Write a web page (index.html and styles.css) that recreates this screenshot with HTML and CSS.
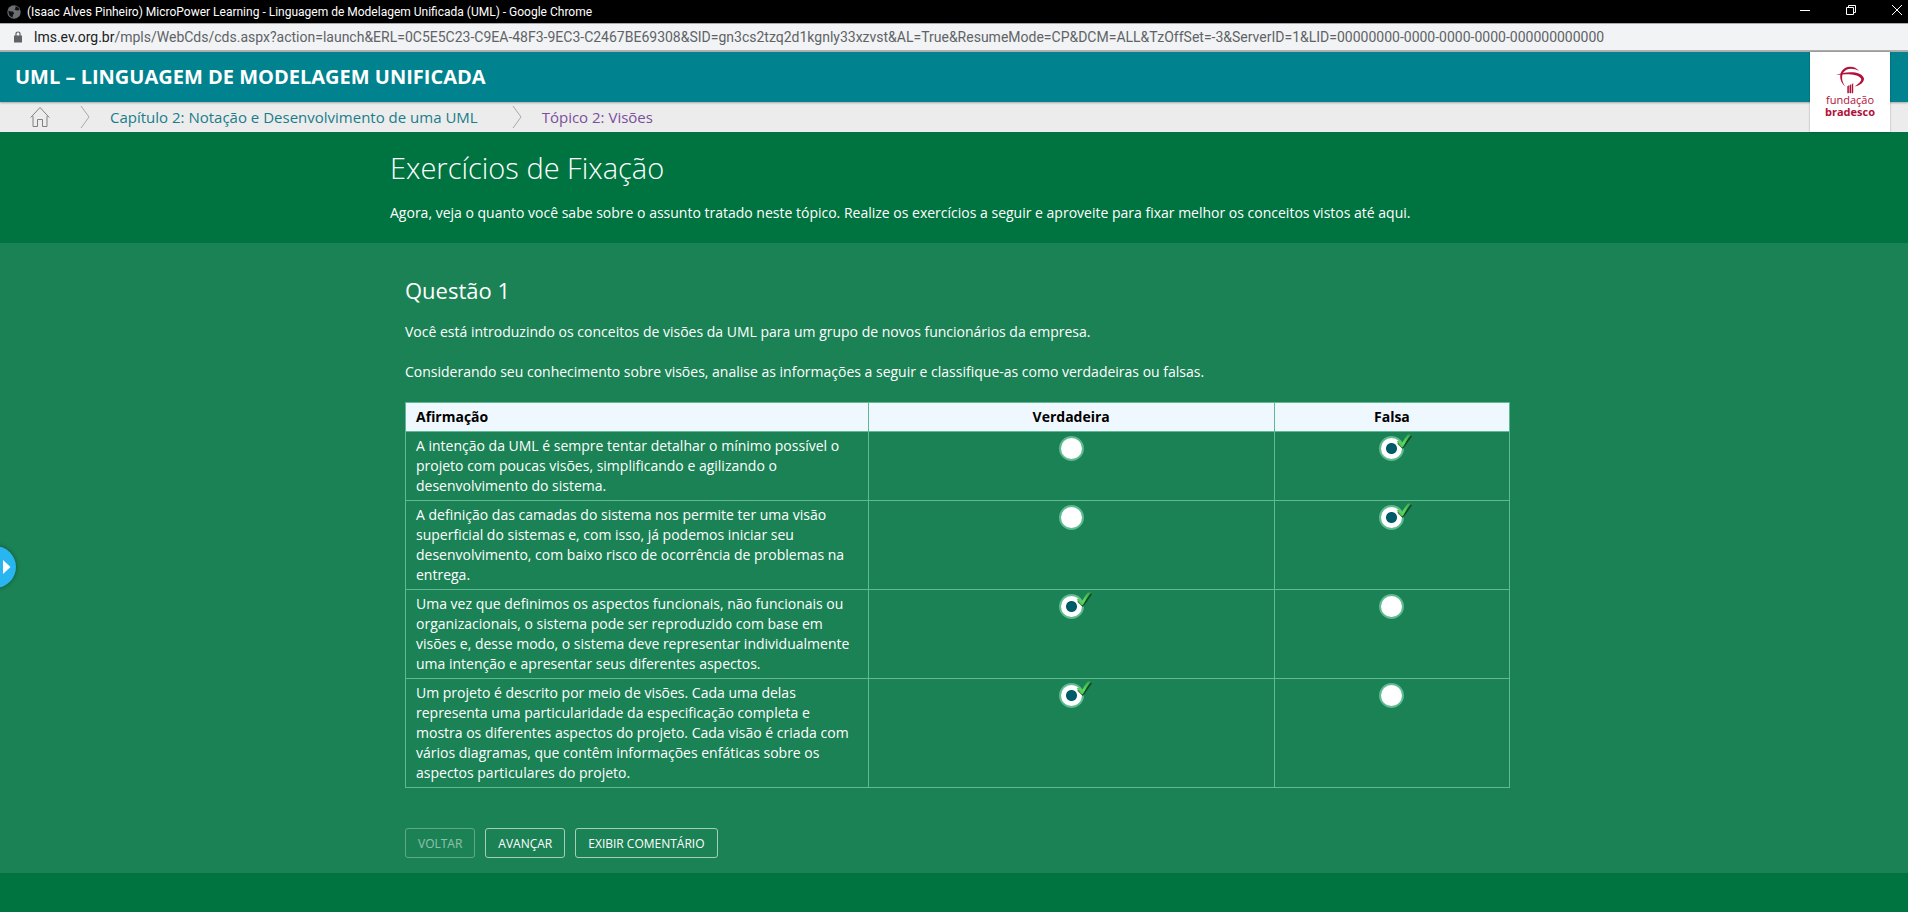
FILE: index.html
```html
<!DOCTYPE html>
<html lang="pt-BR">
<head>
<meta charset="utf-8">
<title>MicroPower Learning - Linguagem de Modelagem Unificada (UML)</title>
<link rel="stylesheet" href="styles.css">
</head>
<body>
<svg class="defs" width="0" height="0" aria-hidden="true">
  <defs>
    <linearGradient id="tick-fill" x1="1" y1="0" x2="0" y2="1">
      <stop offset="0" stop-color="#35a83f"/><stop offset=".6" stop-color="#5edb5c"/><stop offset="1" stop-color="#3db046"/>
    </linearGradient>
    <symbol id="tick" viewBox="0 0 16 16">
      <path d="M2.500 9.500L6.800 13.800L14.800 2.500" fill="none" stroke="#0d3f22" stroke-opacity=".85" stroke-width="1.800" stroke-linecap="round" stroke-linejoin="round"/>
      <path d="M.8 7.500Q2.500 5.800 4 7L5.800 9.500Q9 3.500 12 .5L14.800 .5Q10.500 6 6.800 13.200L5 12.800Z" fill="url(#tick-fill)"/>
    </symbol>
  </defs>
</svg>

<div class="titlebar">
  <svg class="globe" width="14" height="14" viewBox="0 0 14 14" aria-hidden="true">
    <circle cx="7" cy="7" r="6.700" fill="#6b6f73"/>
    <path d="M1.500 5.500L3.500 6.500L6 6.500L7 8.500L6 10L5.500 12.500Q1 11 1.500 5.500Z M8.500 1.300Q12 2 12.500 5L10 5.500L7.500 4.500L8.500 3Z" fill="#101010"/>
  </svg>
  <span class="window-title">(Isaac Alves Pinheiro) MicroPower Learning - Linguagem de Modelagem Unificada (UML) - Google Chrome</span>
  <div class="window-controls">
    <button class="window-button" type="button" aria-label="Minimizar"><svg width="12" height="12" viewBox="0 0 12 12"><path d="M1 6.500H11"/></svg></button>
    <button class="window-button" type="button" aria-label="Restaurar"><svg width="12" height="12" viewBox="0 0 12 12"><path d="M1.500 3.500H8.500V10.500H1.500Z M3.500 3V1.500H10.500V8.500H9"/></svg></button>
    <button class="window-button" type="button" aria-label="Fechar"><svg width="12" height="12" viewBox="0 0 12 12"><path d="M1 1L11 11M11 1L1 11"/></svg></button>
  </div>
</div>

<div class="address">
  <svg width="8" height="12" viewBox="0 0 8 12" aria-hidden="true"><path d="M0 4.500H8V11.500H0Z" fill="#5f6368"/><path d="M2 5V2.700Q2 1 4 1T6 2.700V5" fill="none" stroke="#5f6368" stroke-width="1.200"/></svg>
  <span class="url"><span class="host">lms.ev.org.br</span>/mpls/WebCds/cds.aspx?action=launch&amp;ERL=0C5E5C23-C9EA-48F3-9EC3-C2467BE69308&amp;SID=gn3cs2tzq2d1kgnly33xzvst&amp;AL=True&amp;ResumeMode=CP&amp;DCM=ALL&amp;TzOffSet=-3&amp;ServerID=1&amp;LID=00000000-0000-0000-0000-000000000000</span>
</div>

<div class="page">
  <header class="course">
    <h1 class="course-title">UML – LINGUAGEM DE MODELAGEM UNIFICADA</h1>
    <nav class="crumbs" aria-label="Navegação">
      <a class="home" href="#" aria-label="Início"><svg width="20" height="22" viewBox="0 0 20 22"><path d="M.7 11.500L10 1.500L19.300 11.500M3 10V20.500H7.500V13.500H12.500V20.500H17V10"/></svg></a>
      <svg class="chevron" width="10" height="24" viewBox="0 0 10 24" aria-hidden="true"><path d="M1 1L9 12L1 23"/></svg>
      <a class="crumb chapter" href="#">Capítulo 2: Notação e Desenvolvimento de uma UML</a>
      <svg class="chevron" width="10" height="24" viewBox="0 0 10 24" aria-hidden="true"><path d="M1 1L9 12L1 23"/></svg>
      <a class="crumb topic" href="#">Tópico 2: Visões</a>
    </nav>
    <div class="brand">
      <svg width="28" height="28" viewBox="0 0 28 28" aria-hidden="true">
        <path d="M9.500 20.500C3 16 2 6 9 2C14 -.5 20 1 23 5C17 1.500 10 2 7 7C5 12 6.500 17 9.500 20.500Z" fill="#b1103a"/>
        <path d="M0 9C9 5 26 4.500 28 12.500C28 16.500 24 19.500 18.500 20.500C23 17.500 26 15 25 12.500C22 8 11 7.500 0 9Z" fill="#b1103a"/>
        <path d="M11.500 20.500L12.800 19.500V27H11.500ZM13.800 19.500L15 18.500V27H13.800ZM16 18.500L17 17.500V27H16Z" fill="#b1103a" stroke="#b1103a" stroke-width=".4"/>
      </svg>
      <span class="brand-name">fundação</span>
      <strong class="brand-name">bradesco</strong>
    </div>
  </header>

  <main class="main">
    <section class="intro">
      <div class="container">
        <h2 class="intro-title">Exercícios de Fixação</h2>
        <p class="intro-text">Agora, veja o quanto você sabe sobre o assunto tratado neste tópico. Realize os exercícios a seguir e aproveite para fixar melhor os conceitos vistos até aqui.</p>
      </div>
    </section>

    <section class="question">
      <div class="container question-body">
        <h3 class="question-title">Questão 1</h3>
        <p class="question-text">Você está introduzindo os conceitos de visões da UML para um grupo de novos funcionários da empresa.</p>
        <p class="question-text">Considerando seu conhecimento sobre visões, analise as informações a seguir e classifique-as como verdadeiras ou falsas.</p>
        <table class="answers">
          <colgroup><col class="col-claim"><col class="col-true"><col class="col-false"></colgroup>
          <thead>
            <tr><th class="claim" scope="col">Afirmação</th><th scope="col">Verdadeira</th><th scope="col">Falsa</th></tr>
          </thead>
          <tbody>
            <tr>
              <td class="claim">A intenção da UML é sempre tentar detalhar o mínimo possível o projeto com poucas visões, simplificando e agilizando o desenvolvimento do sistema.</td>
              <td><label class="option"><input class="radio" type="radio" name="q1" aria-label="Verdadeira"></label></td>
              <td><label class="option"><input class="radio" type="radio" name="q1" aria-label="Falsa" checked><svg class="tick"><use href="#tick"/></svg></label></td>
            </tr>
            <tr>
              <td class="claim">A definição das camadas do sistema nos permite ter uma visão superficial do sistemas e, com isso, já podemos iniciar seu desenvolvimento, com baixo risco de ocorrência de problemas na entrega.</td>
              <td><label class="option"><input class="radio" type="radio" name="q2" aria-label="Verdadeira"></label></td>
              <td><label class="option"><input class="radio" type="radio" name="q2" aria-label="Falsa" checked><svg class="tick"><use href="#tick"/></svg></label></td>
            </tr>
            <tr>
              <td class="claim">Uma vez que definimos os aspectos funcionais, não funcionais ou organizacionais, o sistema pode ser reproduzido com base em visões e, desse modo, o sistema deve representar individualmente uma intenção e apresentar seus diferentes aspectos.</td>
              <td><label class="option"><input class="radio" type="radio" name="q3" aria-label="Verdadeira" checked><svg class="tick"><use href="#tick"/></svg></label></td>
              <td><label class="option"><input class="radio" type="radio" name="q3" aria-label="Falsa"></label></td>
            </tr>
            <tr>
              <td class="claim">Um projeto é descrito por meio de visões. Cada uma delas representa uma particularidade da especificação completa e mostra os diferentes aspectos do projeto. Cada visão é criada com vários diagramas, que contêm informações enfáticas sobre os aspectos particulares do projeto.</td>
              <td><label class="option"><input class="radio" type="radio" name="q4" aria-label="Verdadeira" checked><svg class="tick"><use href="#tick"/></svg></label></td>
              <td><label class="option"><input class="radio" type="radio" name="q4" aria-label="Falsa"></label></td>
            </tr>
          </tbody>
        </table>
        <div class="actions">
          <button class="action" type="button" disabled>VOLTAR</button>
          <button class="action" type="button">AVANÇAR</button>
          <button class="action" type="button">EXIBIR COMENTÁRIO</button>
        </div>
      </div>
    </section>
  </main>
</div>

<button class="drawer" type="button" aria-label="Abrir menu"><svg width="8" height="14" viewBox="0 0 8 14"><path d="M0 0L7.500 7L0 14Z" fill="#fff"/></svg></button>
</body>
</html>
```
FILE: styles.css
```css
* { box-sizing: border-box; }

body {
  margin: 0;
  min-height: 100vh;
  display: flex;
  flex-direction: column;
  background: #007440;
  color: #fff;
  font: 14px/20px "Open Sans", "Noto Sans", sans-serif;
}

h1, h2, h3, p { margin: 0; }
a { text-decoration: none; }
button { font-family: inherit; cursor: pointer; }
.defs { position: absolute; }

/* Browser window */
.titlebar {
  display: flex;
  align-items: center;
  height: 23px;
  padding-left: 7px;
  gap: 6px;
  background: #000;
  font: 12px/16px Roboto, sans-serif;
}
.window-title { flex: 1; white-space: nowrap; }
.window-controls { display: flex; gap: 34px; padding: 0 5px 3px 0; }
.window-button { display: flex; padding: 0; border: 0; background: none; }
.window-button svg { fill: none; stroke: #fff; }

.address {
  display: flex;
  align-items: center;
  gap: 12px;
  height: 29px;
  padding: 0 14px;
  border-top: 1px solid #a9a9a9;
  border-bottom: 2px solid #b0b0b0;
  background: #f1f3f4;
  color: #5f6368;
  font: 14px/20px Roboto, sans-serif;
}
.url { flex: 1; white-space: nowrap; }
.host { color: #202124; }

/* Course header */
.page { flex: 1; display: flex; flex-direction: column; }
.course { position: relative; background: #ececec; }
.course-title {
  padding: 0 15px;
  background: #00838f;
  box-shadow: 0 1px 2px rgba(0, 0, 0, .3);
  font-size: 20px;
  line-height: 50px;
  font-weight: 700;
}
.crumbs { display: flex; align-items: center; height: 30px; padding-left: 30px; }
.home { display: flex; margin-right: 30px; }
.home svg { fill: none; stroke: #808080; stroke-width: 1; }
.chevron { fill: none; stroke: #aaa; stroke-width: 1; }
.crumb { font-size: 15px; }
.chapter { margin: 0 34px 0 20px; color: #187d8b; }
.topic { margin-left: 20px; color: #7b4f9d; }
.brand {
  position: absolute;
  top: 0;
  right: 18px;
  width: 80px;
  height: 80px;
  padding-top: 14px;
  display: flex;
  flex-direction: column;
  align-items: center;
  background: #fff;
  color: #b1103a;
  box-shadow: 0 0 2px rgba(0, 0, 0, .3);
}
.brand-name { font-size: 11px; line-height: 12px; }

/* Content */
.main { flex: 1; }
.container { max-width: 1128px; margin: 0 auto; }
.intro { padding: 16px 0 20px; background: #007440; }
.intro-title { margin-bottom: 15px; font-size: 29px; line-height: 40px; font-weight: 300; }
.question { padding: 31px 0 15px; background: #1b8255; }
.question-body { padding: 0 8px 0 15px; }
.question-title { margin-bottom: 16px; font-size: 22px; line-height: 32px; font-weight: 400; }
.question-text { margin-bottom: 20px; }

.answers { width: 100%; border-collapse: collapse; table-layout: fixed; }
.col-claim { width: 41.9%; }
.col-true { width: 36.8%; }
.answers th, .answers td {
  padding: 4px 10px;
  border: 1px solid #5fb992;
  text-align: center;
  vertical-align: top;
}
.answers th { background: #f0f8ff; color: #000; font-weight: 700; }
.answers .claim { text-align: left; }
.option { position: relative; display: inline-block; vertical-align: top; }
.radio {
  appearance: none;
  display: block;
  width: 25px;
  height: 25px;
  margin: 0;
  border: 2px solid #5fb992;
  border-radius: 50%;
  background: #fff;
}
.radio:checked { background: radial-gradient(circle, #005b69 5px, #fff 6px); }
.tick { position: absolute; top: -2px; left: 17px; width: 16px; height: 16px; }

.actions { display: flex; gap: 10px; margin-top: 40px; }
.action {
  height: 30px;
  padding: 0 12px;
  border: 1px solid #a4cdbb;
  border-radius: 3px;
  background: transparent;
  color: #fff;
  font-size: 12px;
}
.action:disabled { opacity: .5; cursor: default; }

/* Side drawer handle */
.drawer {
  position: fixed;
  left: -26px;
  top: 546px;
  width: 42px;
  height: 42px;
  padding: 0 0 0 29px;
  display: flex;
  align-items: center;
  border: 0;
  border-radius: 50%;
  background: #29b6f0;
  box-shadow: 0 0 4px rgba(0, 0, 0, .4);
}
```
